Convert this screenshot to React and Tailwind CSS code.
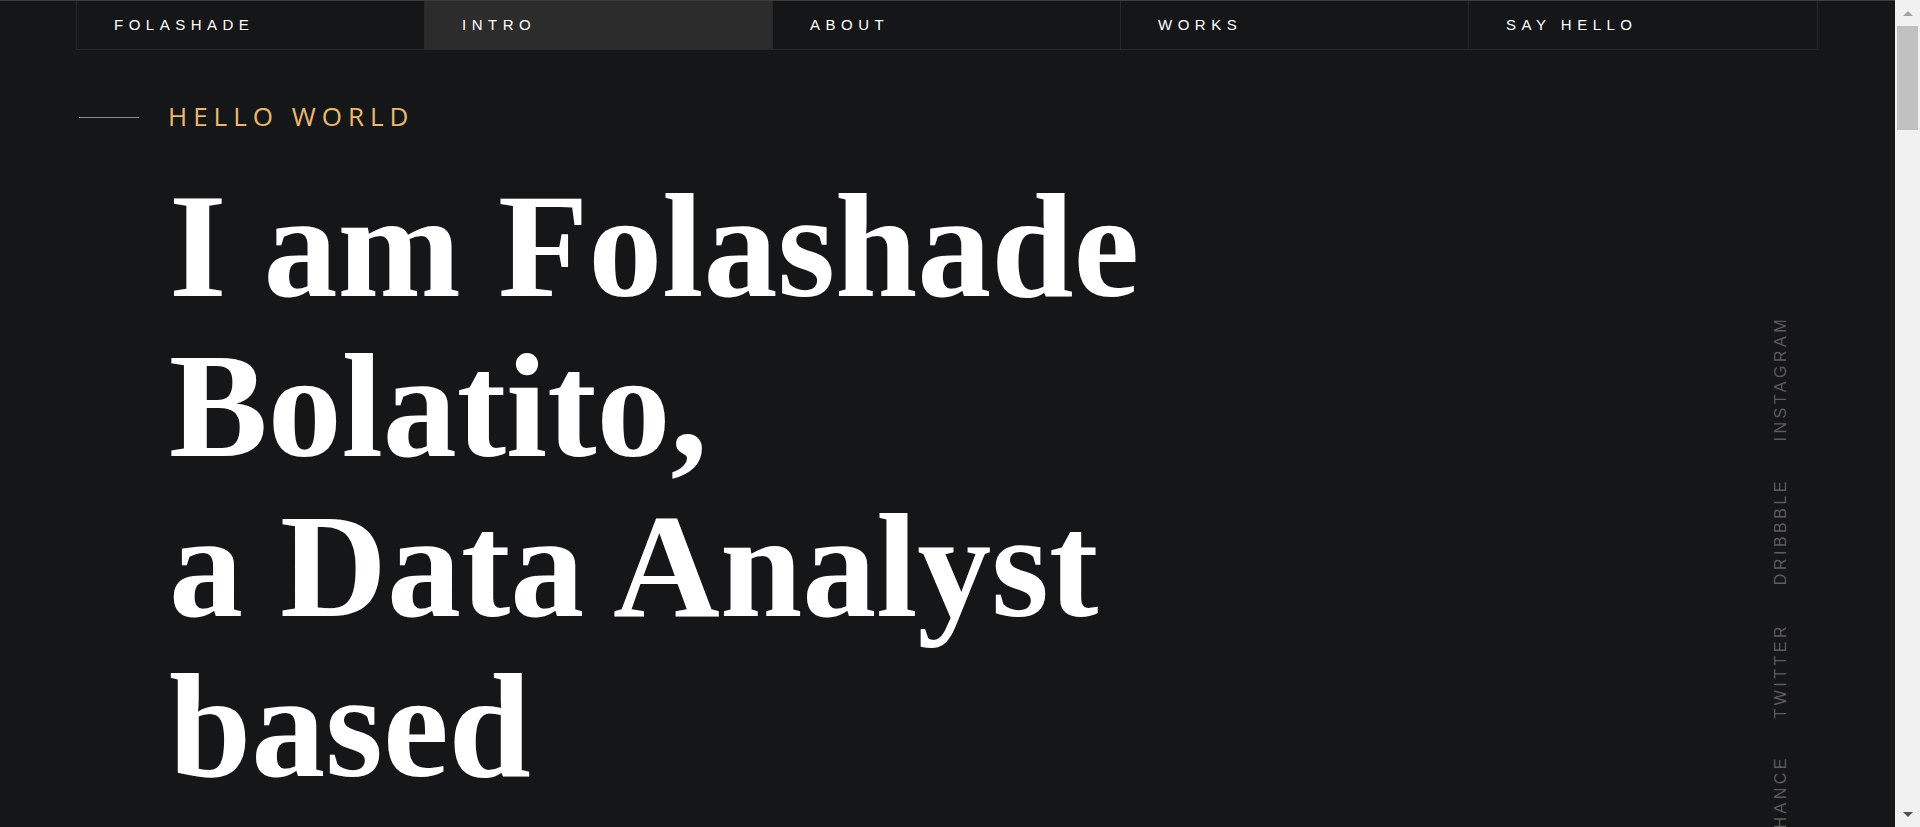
const navItems = ["Folashade", "Intro", "About", "Works", "Say Hello"];
const socials = ["Instagram", "Dribbble", "Twitter", "Behance", "LinkedIn"];

// browser scrollbar as it shows in the screenshot
function Scrollbar() {
  return (
    <div aria-hidden="true" className="fixed top-0 right-0 h-screen w-[25px] bg-[#f1f1f1] flex flex-col items-center">
      <div className="h-[26px] w-full flex items-center justify-center">
        <span className="w-0 h-0 border-x-[5px] border-x-transparent border-b-[5px] border-b-[#a3a3a3]" />
      </div>
      <div className="w-[21px] h-[104px] bg-[#c1c1c1]" />
      <div className="flex-1" />
      <div className="h-[26px] w-full flex items-center justify-center">
        <span className="w-0 h-0 border-x-[5px] border-x-transparent border-t-[5px] border-t-[#505050]" />
      </div>
    </div>
  );
}

export default function App() {
  const active = "Intro";

  return (
    <div className="min-h-screen bg-[#151618] border-t border-[#3b3b3b] text-white">
      <nav className="ml-[76px] w-[1742px] h-[49px] grid grid-cols-5 border-x border-b border-[#26272a]">
        {navItems.map((item, i) => (
          <a
            key={item}
            href="#"
            className={
              "flex items-center pl-[37px] uppercase text-[15px] leading-[20px] tracking-[5.5px] font-['Liberation_Sans',Arial,sans-serif] " +
              (i < navItems.length - 1 ? "border-r border-[#26272a] " : "") +
              (item === active ? "bg-[#2c2c2c]" : "")
            }
          >
            {item}
          </a>
        ))}
      </nav>

      <main className="ml-[76px] w-[1742px] flex">
        <section className="flex-1 pl-[3px]">
          <div className="mt-[53px] flex items-start gap-[29px]">
            <span className="mt-[14px] w-[60px] h-px bg-[#8a8a8a]" />
            <p className="text-[26px] leading-[26px] tracking-[6px] text-[#e9b86f] uppercase font-['Open_Sans',sans-serif]">
              Hello World
            </p>
          </div>

          <h1 className="mt-[37px] pl-[90px] text-[148px] leading-[160px] font-bold font-['Liberation_Serif','Times_New_Roman',serif] text-white">
            I am Folashade
            <br />
            Bolatito,
            <br />
            a Data Analyst
            <br />
            based
            <br />
            in Lagos, Nigeria.
          </h1>
        </section>

        <aside className="pr-[27px] pt-[266px] flex flex-col gap-[37px]">
          {socials.map((s) => (
            <a
              key={s}
              href="#"
              className="[writing-mode:vertical-rl] rotate-180 uppercase text-[16px] leading-[20px] tracking-[3.5px] text-[#5a5b5d] font-['Liberation_Sans',Arial,sans-serif]"
            >
              {s}
            </a>
          ))}
        </aside>
      </main>

      <Scrollbar />
    </div>
  );
}
